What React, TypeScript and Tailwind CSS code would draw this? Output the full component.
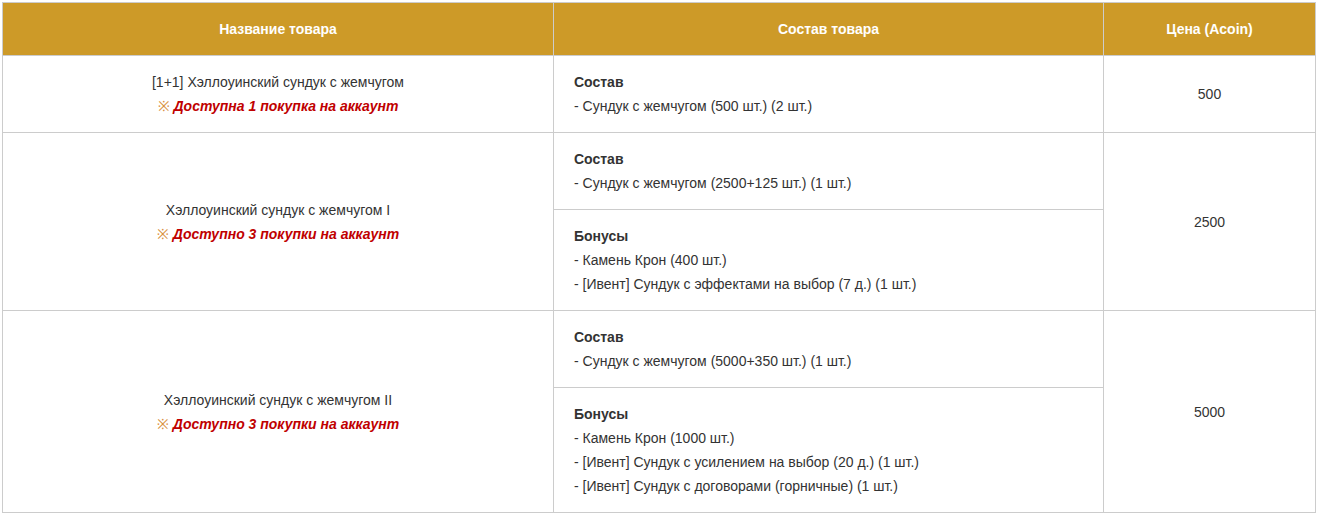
import React from 'react';

type Block = { title: string; items: string[] };
type Row = { name: string; limit: string; price: string; blocks: Block[] };

const rows: Row[] = [
    {
        name: '[1+1] Хэллоуинский сундук с жемчугом',
        limit: 'Доступна 1 покупка на аккаунт',
        price: '500',
        blocks: [{ title: 'Состав', items: ['- Сундук с жемчугом (500 шт.) (2 шт.)'] }],
    },
    {
        name: 'Хэллоуинский сундук с жемчугом I',
        limit: 'Доступно 3 покупки на аккаунт',
        price: '2500',
        blocks: [
            { title: 'Состав', items: ['- Сундук с жемчугом (2500+125 шт.) (1 шт.)'] },
            {
                title: 'Бонусы',
                items: ['- Камень Крон (400 шт.)', '- [Ивент] Сундук с эффектами на выбор (7 д.) (1 шт.)'],
            },
        ],
    },
    {
        name: 'Хэллоуинский сундук с жемчугом II',
        limit: 'Доступно 3 покупки на аккаунт',
        price: '5000',
        blocks: [
            { title: 'Состав', items: ['- Сундук с жемчугом (5000+350 шт.) (1 шт.)'] },
            {
                title: 'Бонусы',
                items: [
                    '- Камень Крон (1000 шт.)',
                    '- [Ивент] Сундук с усилением на выбор (20 д.) (1 шт.)',
                    '- [Ивент] Сундук с договорами (горничные) (1 шт.)',
                ],
            },
        ],
    },
];

const cell = 'border border-[#cccccc] py-[14px] align-middle';

const App = () => {
    return (
        <div
            className="bg-white p-[2px] text-[14px] leading-[24px] text-[#333333]"
            style={{ fontFamily: '"Liberation Sans", Arial, sans-serif' }}
        >
            <table className="w-full table-fixed border-collapse">
                <colgroup>
                    <col className="w-[551px]" />
                    <col className="w-[550px]" />
                    <col />
                </colgroup>
                <thead>
                    <tr className="bg-[#cd9a28] text-white font-bold">
                        <th className="border border-[#cccccc] h-[53px] text-center">Название товара</th>
                        <th className="border border-[#cccccc] h-[53px] text-center">Состав товара</th>
                        <th className="border border-[#cccccc] h-[53px] text-center">Цена (Acoin)</th>
                    </tr>
                </thead>
                <tbody>
                    {rows.map((row) =>
                        row.blocks.map((block, i) => (
                            <tr key={row.name + i}>
                                {i === 0 && (
                                    <td rowSpan={row.blocks.length} className={`${cell} text-center`}>
                                        <div>{row.name}</div>
                                        <div>
                                            <span className="text-[#d9913f]">※ </span>
                                            <span className="font-bold italic text-[#c00000]">{row.limit}</span>
                                        </div>
                                    </td>
                                )}
                                <td className={`${cell} px-[20px] text-left`}>
                                    <div className="font-bold">{block.title}</div>
                                    {block.items.map((item) => (
                                        <div key={item}>{item}</div>
                                    ))}
                                </td>
                                {i === 0 && (
                                    <td rowSpan={row.blocks.length} className={`${cell} text-center`}>
                                        {row.price}
                                    </td>
                                )}
                            </tr>
                        ))
                    )}
                </tbody>
            </table>
        </div>
    );
};

export default App;
